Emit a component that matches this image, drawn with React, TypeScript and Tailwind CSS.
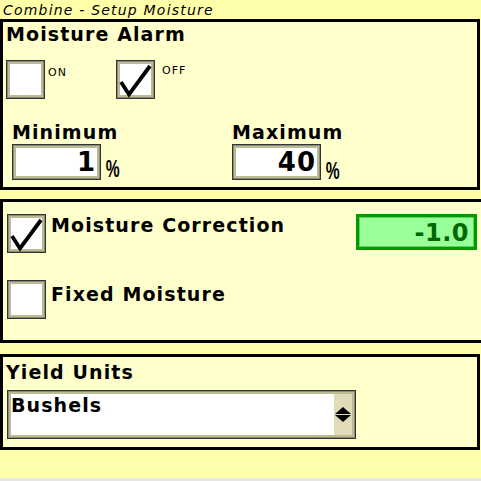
import React from 'react';

const font = "font-['DejaVu_Sans',sans-serif]";
const label = 'text-[19px] leading-[22px] font-bold tracking-[1.1px]';

const Bevel = ({ className = '', children }: { className?: string; children?: React.ReactNode }) => (
  <div className={`border border-[#333333] ${className}`}>
    <div className="w-full h-full border border-[#8a8a7c]">
      <div className="w-full h-full border-2 border-[#bcbc94] bg-white">{children}</div>
    </div>
  </div>
);

const CheckBox = ({ checked = false }: { checked?: boolean }) => (
  <div className="relative w-[39px] h-[39px] shrink-0">
    <Bevel className="w-full h-full" />
    {checked && (
      <svg className="absolute inset-0" width="39" height="39" viewBox="0 0 39 39">
        <polyline points="5,22 13,34.5 34,6" fill="none" stroke="#000" strokeWidth="3.8" />
      </svg>
    )}
  </div>
);

const NumberBox = ({ value, pctTop }: { value: string; pctTop: string }) => (
  <div className="flex items-start">
    <Bevel className="w-[89px] h-[36px]">
      <div className="h-full pr-[1px] text-right text-[26px] leading-[28px] font-bold tracking-[1px]">{value}</div>
    </Bevel>
    <span className={`ml-[1px] ${pctTop} inline-block scale-x-[0.65] font-['Liberation_Sans',sans-serif] font-bold text-[24px] leading-[22px]`}>%</span>
  </div>
);

const Panel = ({ className = '', children }: { className?: string; children?: React.ReactNode }) => (
  <section className={`shrink-0 border-[3px] border-black bg-[#ffffcc] ${className}`}>{children}</section>
);

export default function App() {
  return (
    <div className={`w-[481px] h-[481px] overflow-hidden bg-[#e6e6e6] text-black ${font}`}>
      <div className="h-[478px] bg-[#ffffaa] flex flex-col">
        <div className="h-[19px] pl-[3px] italic text-[14px] leading-[21px] tracking-[1.2px]">
          Combine - Setup Moisture
        </div>

        <Panel className="w-[480px] h-[171px]">
          <h2 className={`mt-[1px] pl-[3px] ${label}`}>Moisture Alarm</h2>
          <div className="mt-[15px] ml-[3px] flex items-start">
            <div className="w-[110px] flex items-start">
              <CheckBox />
              <span className="ml-[3px] mt-[6px] text-[11px] leading-[13px] tracking-[1px]">ON</span>
            </div>
            <CheckBox checked />
            <span className="ml-[7px] mt-[4px] text-[11px] leading-[13px] tracking-[1px]">OFF</span>
          </div>
          <div className="mt-[22px] ml-[9px] flex">
            <div className="w-[220px]">
              <div className={label}>Minimum</div>
              <div className="mt-[1px]">
                <NumberBox value="1" pctTop="mt-[14px]" />
              </div>
            </div>
            <div>
              <div className={label}>Maximum</div>
              <div className="mt-[1px]">
                <NumberBox value="40" pctTop="mt-[16px]" />
              </div>
            </div>
          </div>
        </Panel>

        <Panel className="w-[486px] mt-[9px] h-[144px]">
          <div className="mt-[12px] ml-[4px] flex items-start">
            <CheckBox checked />
            <span className={`ml-[5px] ${label}`}>Moisture Correction</span>
            <div className="ml-auto mr-[6px] w-[121px] h-[36px] border-[3px] border-[#009900]">
              <div className="h-full border border-[#66cc66] bg-[#99ff99] pr-[4px] text-right text-[24px] leading-[30px] font-bold text-[#006600] tracking-[0.5px]">
                -1.0
              </div>
            </div>
          </div>
          <div className="mt-[27px] ml-[4px] flex items-start">
            <CheckBox />
            <span className={`ml-[5px] mt-[3px] ${label}`}>Fixed Moisture</span>
          </div>
        </Panel>

        <Panel className="w-[480px] mt-[11px] h-[96px]">
          <h2 className={`mt-[4px] pl-[3px] ${label}`}>Yield Units</h2>
          <div className="mt-[7px] ml-[4px]">
            <Bevel className="w-[349px] h-[49px]">
              <div className="flex h-full">
                <div className={`flex-1 ${label}`}>Bushels</div>
                <div className="w-[18px] bg-[#e2dcb6] flex flex-col items-center justify-center gap-[1px]">
                  <svg width="16" height="7" viewBox="0 0 16 7">
                    <polygon points="8,0 16,7 0,7" fill="#000" />
                  </svg>
                  <svg width="16" height="7" viewBox="0 0 16 7">
                    <polygon points="0,0 16,0 8,7" fill="#000" />
                  </svg>
                </div>
              </div>
            </Bevel>
          </div>
        </Panel>
      </div>
    </div>
  );
}
